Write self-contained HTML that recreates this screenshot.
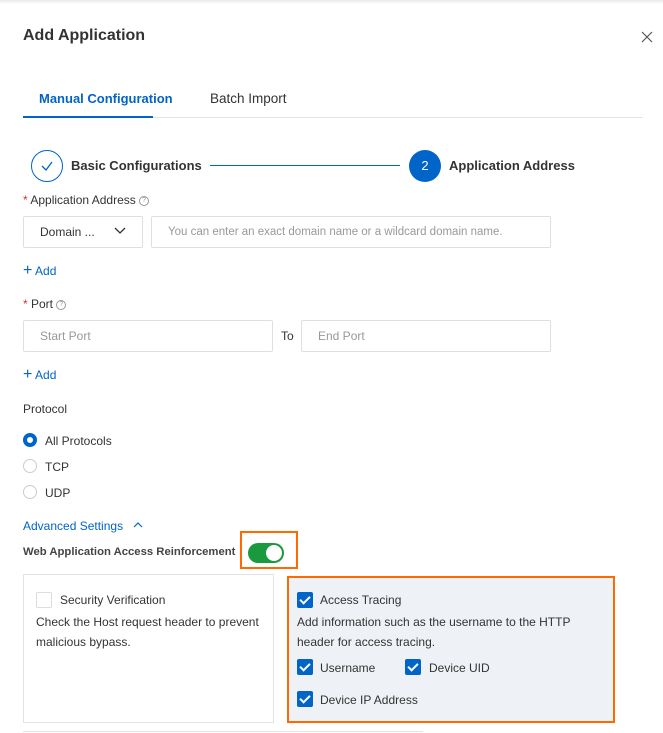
<!DOCTYPE html>
<html><head><style>
*{box-sizing:border-box;margin:0;padding:0}
body{width:663px;height:733px;background:#fff;font-family:"Liberation Sans",sans-serif;color:#333;position:relative;overflow:hidden;font-size:12px}
.a{position:absolute;white-space:nowrap}
.inp{position:absolute;border:1px solid #dcdfe6;border-radius:2px;height:32px;color:#999;font-size:12px;line-height:30px;padding-left:16px}
.blue{color:#0064c8}
.cb{position:absolute;width:16px;height:16px;background:#0064c8;border-radius:2px}
.cb:after{content:"";position:absolute;left:5px;top:2px;width:4px;height:8px;border:solid #fff;border-width:0 2px 2px 0;transform:rotate(45deg)}
.radio{position:absolute;width:14px;height:14px;border:1px solid #ccc;border-radius:50%}
</style></head><body>
<div style="position:absolute;left:0;top:0;width:663px;height:4px;background:linear-gradient(#e8e8e8,#fff)"></div>
<div class="a" style="left:23px;top:27px;font-size:16px;font-weight:bold;color:#333">Add Application</div>
<svg class="a" style="left:641px;top:31px" width="12" height="12"><path d="M1 1L11 11M11 1L1 11" stroke="#555" stroke-width="1.2"/></svg>
<div class="a blue" style="left:39px;top:91px;font-size:13px;font-weight:bold">Manual Configuration</div>
<div class="a" style="left:210px;top:91px;font-size:13.5px;color:#333">Batch Import</div>
<div class="a" style="left:23px;top:117px;width:620px;height:1px;background:#e3e3e3"></div>
<div class="a" style="left:23px;top:116px;width:130px;height:2px;background:#0064c8"></div>
<div class="a" style="left:31px;top:150px;width:32px;height:32px;border:1px solid #0064c8;border-radius:50%"></div>
<svg class="a" style="left:40px;top:159px" width="14" height="14"><path d="M2 7L6 11L12 3" stroke="#0064c8" stroke-width="1.3" fill="none"/></svg>
<div class="a" style="left:71px;top:158px;font-size:13px;font-weight:bold">Basic Configurations</div>
<div class="a" style="left:210px;top:165px;width:190px;height:1px;background:#0064c8"></div>
<div class="a" style="left:409px;top:150px;width:32px;height:32px;background:#0064c8;border-radius:50%;color:#fff;text-align:center;line-height:32px;font-size:13px">2</div>
<div class="a" style="left:449px;top:158px;font-size:13px;font-weight:bold">Application Address</div>
<div class="a" style="left:23px;top:193px;font-size:12px"><span style="color:#d93026">*</span> Application Address <span style="display:inline-block;width:10px;height:10px;border:1px solid #999;border-radius:50%;font-size:7px;line-height:8px;text-align:center;color:#999;vertical-align:middle">?</span></div>
<div class="inp" style="left:23px;top:216px;width:120px;color:#333">Domain ...</div>
<svg class="a" style="left:114px;top:226px" width="12" height="10"><path d="M1 2L6 7L11 2" stroke="#333" stroke-width="1.3" fill="none"/></svg>
<div class="inp" style="left:151px;top:216px;width:400px;font-size:11.5px">You can enter an exact domain name or a wildcard domain name.</div>
<div class="a blue" style="left:23px;top:262px;font-size:12px"><span style="font-size:16px">+</span> Add</div>
<div class="a" style="left:23px;top:297px"><span style="color:#d93026">*</span> Port <span style="display:inline-block;width:10px;height:10px;border:1px solid #999;border-radius:50%;font-size:7px;line-height:8px;text-align:center;color:#999;vertical-align:middle">?</span></div>
<div class="inp" style="left:23px;top:320px;width:250px">Start Port</div>
<div class="a" style="left:281px;top:329px">To</div>
<div class="inp" style="left:301px;top:320px;width:250px">End Port</div>
<div class="a blue" style="left:23px;top:366px"><span style="font-size:16px">+</span> Add</div>
<div class="a" style="left:23px;top:402px">Protocol</div>
<div class="radio" style="left:23px;top:433px;border:4px solid #0064c8"></div>
<div class="a" style="left:45px;top:434px">All Protocols</div>
<div class="radio" style="left:23px;top:459px"></div>
<div class="a" style="left:45px;top:460px">TCP</div>
<div class="radio" style="left:23px;top:485px"></div>
<div class="a" style="left:45px;top:486px">UDP</div>
<div class="a blue" style="left:23px;top:519px">Advanced Settings</div>
<svg class="a" style="left:132px;top:520px" width="12" height="10"><path d="M2 7L6 3L10 7" stroke="#0064c8" stroke-width="1.2" fill="none"/></svg>
<div class="a" style="left:23px;top:546px;font-weight:bold;color:#444;font-size:11.3px">Web Application Access Reinforcement</div>
<div class="a" style="left:240px;top:531px;width:58px;height:38px;border:2px solid #ff6a00"></div>
<div class="a" style="left:248px;top:543px;width:36px;height:20px;border-radius:10px;background:#1a9a3f"></div>
<div class="a" style="left:266px;top:545px;width:16px;height:16px;border-radius:50%;background:#fff"></div>
<div class="a" style="left:23px;top:574px;width:251px;height:149px;border:1px solid #e3e3e3"></div>
<div class="a" style="left:36px;top:592px;width:16px;height:16px;border:1px solid #ddd;border-radius:2px"></div>
<div class="a" style="left:60px;top:593px">Security Verification</div>
<div class="a" style="left:36px;top:612px;line-height:20px">Check the Host request header to prevent<br>malicious bypass.</div>
<div class="a" style="left:287px;top:576px;width:328px;height:147px;border:2px solid #ff6a00;background:#eef1f6"></div>
<div class="cb" style="left:297px;top:592px"></div>
<div class="a" style="left:320px;top:593px">Access Tracing</div>
<div class="a" style="left:297px;top:612px;line-height:20px">Add information such as the username to the HTTP<br>header for access tracing.</div>
<div class="cb" style="left:297px;top:659px"></div>
<div class="a" style="left:320px;top:661px">Username</div>
<div class="cb" style="left:405px;top:659px"></div>
<div class="a" style="left:429px;top:661px">Device UID</div>
<div class="cb" style="left:297px;top:691px"></div>
<div class="a" style="left:320px;top:693px">Device IP Address</div>
<div class="a" style="left:23px;top:731px;width:400px;height:1px;background:#e3e3e3"></div>
</body></html>
